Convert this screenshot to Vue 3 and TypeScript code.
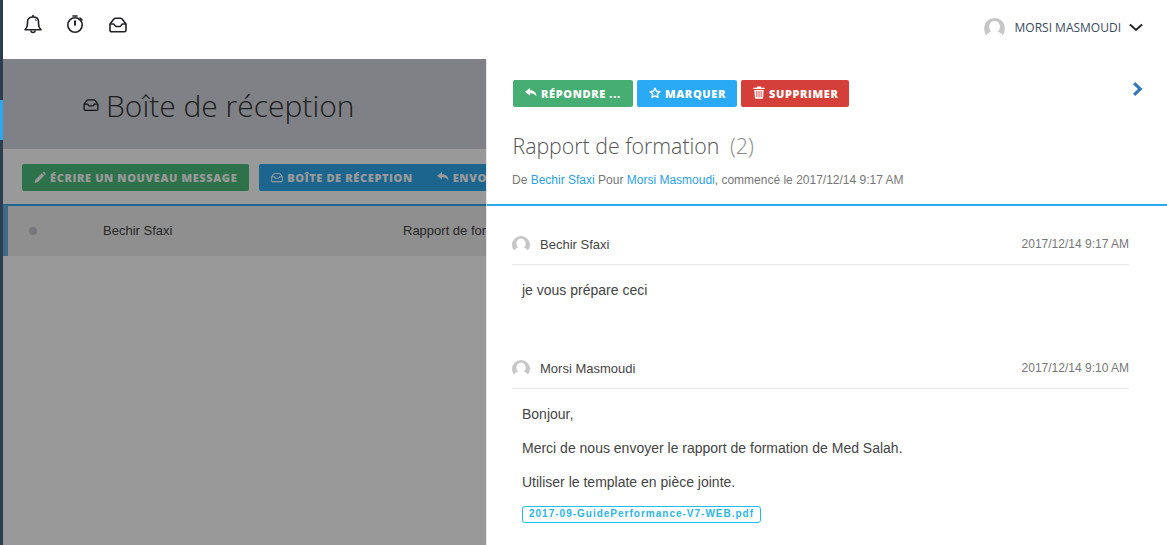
<script setup lang="ts">
interface Message {
  author: string
  date: string
}
const first: Message = { author: 'Bechir Sfaxi', date: '2017/12/14 9:17 AM' }
const second: Message = { author: 'Morsi Masmoudi', date: '2017/12/14 9:10 AM' }
</script>

<template>
  <div class="app">
    <aside class="rail"><div class="rail-active"></div></aside>
    <div class="main">
      <header class="topbar">
        <div class="top-icons">
          <svg class="ti bell" viewBox="0 0 18 20" fill="none" stroke="#1f2126" stroke-width="1.6">
            <path d="M1 15.8c1.6-1.4 2.5-3 2.5-6V7.6C3.5 4.7 5.900 3 9 3s5.500 1.700 5.500 4.600v2.200c0 3 .9 4.600 2.500 6z" stroke-linejoin="round"/>
            <path d="M9 1v2M7 16.500c0 1.300.9 2 2 2s2-.7 2-2"/>
            <path d="M11 5.500c.8.300 1.200.8 1.400 1.500" stroke-width="1"/>
          </svg>
          <svg class="ti clock" viewBox="0 0 18 20" fill="none" stroke="#1f2126" stroke-width="1.6">
            <circle cx="9" cy="11" r="7.200"/>
            <path d="M9 6.500v5" stroke-width="2"/>
            <path d="M7 2h4M14 4l2 2" stroke-linecap="round"/>
          </svg>
          <svg class="ti inbox" viewBox="0 0 18 16" fill="none" stroke="#1f2126" stroke-width="1.6">
            <path d="M1 7 4.500 2.500C5 1.600 5.700 1.200 6.500 1.200h5c.8 0 1.500.4 2 1.300L17 7v6.200c0 .9-.7 1.600-1.600 1.600H2.600c-.9 0-1.600-.7-1.600-1.600z" stroke-linejoin="round"/>
            <path d="M1 7h3.700c.8 0 1.200 2.500 2.300 2.500h4c1.100 0 1.500-2.500 2.300-2.500H17"/>
          </svg>
        </div>
        <div class="user">
          <svg class="avatar-top" viewBox="0 0 20 20">
            <circle cx="10" cy="10" r="10" fill="#c6c6c6"/>
            <ellipse cx="10" cy="8.500" rx="5.200" ry="5.800" fill="#fff"/>
            <path d="M2 17c1-3 4-4.500 8-4.500s7 1.500 8 4.500a10.500 10.500 0 0 1-16 0z" fill="#fff"/>
          </svg>
          <span class="user-name">MORSI MASMOUDI</span>
          <svg class="chev-down" viewBox="0 0 14 9" fill="none" stroke="#22262c" stroke-width="1.900">
            <path d="M1 1.500 7 7l6-5.500"/>
          </svg>
        </div>
      </header>

      <div class="stage">
        <section class="under">
          <div class="page-head">
            <svg class="head-icon" viewBox="0 0 18 14" fill="none" stroke="#222" stroke-width="1.500">
              <path d="M1 6 4 1.800C4.500 1.100 5 .9 5.800.9h6.400c.8 0 1.300.2 1.800.9L17 6v6c0 .7-.5 1.200-1.200 1.200H2.200C1.500 13.200 1 12.700 1 12z" stroke-linejoin="round"/>
              <path d="M1 6h4l1.500 2h5L13 6h4"/>
            </svg>
            <h1 class="page-title">Boîte de réception</h1>
          </div>
          <div class="tools">
            <button class="btn write">
              <svg class="bi" viewBox="0 0 12 12"><path d="M0 12 .8 8.600 8 1.400l2.600 2.600-7.200 7.200zM8.800.6 9.400 0a1 1 0 0 1 1.300 0l1.300 1.300a1 1 0 0 1 0 1.300l-.6.600z" fill="currentColor"/></svg>
              Écrire un nouveau message
            </button>
            <div class="btn-group">
              <button class="btn tab">
                <svg class="bi" viewBox="0 0 18 14" fill="none" stroke="currentColor" stroke-width="1.600">
                  <path d="M1 6 4 1.800C4.500 1.100 5 .9 5.800.9h6.400c.8 0 1.300.2 1.800.9L17 6v6c0 .7-.5 1.200-1.200 1.200H2.200C1.500 13.200 1 12.700 1 12z"/>
                  <path d="M1 6h4l1.500 2h5L13 6h4"/>
                </svg>
                Boîte de réception
              </button>
              <button class="btn tab">
                <svg class="bi reply-ic" viewBox="0 0 12 9"><path d="M5 0 0 3.700 5 7.400V5.200c3 0 4.800.6 6.500 3.300C11.500 4.700 9 2.300 5 2.300z" fill="currentColor"/></svg>
                Envoyés
              </button>
            </div>
          </div>
          <div class="row">
            <span class="dot"></span>
            <span class="row-from">Bechir Sfaxi</span>
            <span class="row-subject">Rapport de formation</span>
          </div>
          <div class="scrim"></div>
        </section>

        <section class="drawer">
          <div class="drawer-head">
            <div class="actions">
              <button class="btn act reply">
                <svg class="bi reply-ic" viewBox="0 0 12 9"><path d="M5 0 0 3.700 5 7.400V5.200c3 0 4.800.6 6.500 3.300C11.500 4.700 9 2.300 5 2.300z" fill="currentColor"/></svg>
                Répondre ...
              </button>
              <button class="btn act mark">
                <svg class="bi star" viewBox="0 0 14 14"><path d="m7 1.300 1.700 3.700 4 .5-3 2.700.8 4L7 10.300l-3.500 1.900.8-4-3-2.700 4-.5z" fill="none" stroke="currentColor" stroke-width="1.600" stroke-linejoin="round"/></svg>
                Marquer
              </button>
              <button class="btn act del">
                <svg class="bi trash" viewBox="0 0 12 14"><path d="M4 .5h4l.7 1.500H12v1.300H0V2h3.300zM1 4.200h10l-.6 8.500c0 .7-.5 1.100-1.100 1.100H2.700c-.6 0-1.100-.4-1.100-1.100zm2.200 1.300v6.500h1V5.500zm2.300 0v6.500h1V5.500zm2.300 0v6.500h1V5.500z" fill="currentColor" fill-rule="evenodd"/></svg>
                Supprimer
              </button>
              <svg class="chev-right" viewBox="0 0 11 14"><path d="M1 2.300 3.200 0 10.500 7 3.200 14 1 11.700 5.900 7z" fill="#337ab7"/></svg>
            </div>
            <h2 class="subject">Rapport de formation <span class="count">(2)</span></h2>
            <p class="meta">De <a>Bechir Sfaxi</a> Pour <a>Morsi Masmoudi</a>, commencé le 2017/12/14 9:17 AM</p>
          </div>

          <div class="thread">
            <article class="msg msg-first">
              <div class="msg-head">
                <svg class="avatar" viewBox="0 0 20 20">
                  <circle cx="10" cy="10" r="10" fill="#c6c6c6"/>
                  <ellipse cx="10" cy="8.500" rx="5.200" ry="5.800" fill="#fff"/>
                  <path d="M2 17c1-3 4-4.500 8-4.500s7 1.500 8 4.500a10.500 10.500 0 0 1-16 0z" fill="#fff"/>
                </svg>
                <span class="msg-author">{{ first.author }}</span>
                <span class="msg-date">{{ first.date }}</span>
              </div>
              <div class="msg-body"><p>je vous prépare ceci</p></div>
            </article>

            <article class="msg">
              <div class="msg-head">
                <svg class="avatar" viewBox="0 0 20 20">
                  <circle cx="10" cy="10" r="10" fill="#c6c6c6"/>
                  <ellipse cx="10" cy="8.500" rx="5.200" ry="5.800" fill="#fff"/>
                  <path d="M2 17c1-3 4-4.500 8-4.500s7 1.500 8 4.500a10.500 10.500 0 0 1-16 0z" fill="#fff"/>
                </svg>
                <span class="msg-author">{{ second.author }}</span>
                <span class="msg-date">{{ second.date }}</span>
              </div>
              <div class="msg-body">
                <p>Bonjour,</p>
                <p>Merci de nous envoyer le rapport de formation de Med Salah.</p>
                <p>Utiliser le template en pièce jointe.</p>
                <a class="chip">2017-09-GuidePerformance-V7-WEB.pdf</a>
              </div>
            </article>
          </div>
        </section>
      </div>
    </div>
  </div>
</template>

<style>
html, body { margin: 0; background: #fff; overflow: hidden; }
</style>

<style scoped>
.app { display: flex; width: 1167px; height: 545px; overflow: hidden; font-family: "Liberation Sans", Arial, sans-serif; color: #333; }
.rail { width: 3px; flex: none; background: #2c3e50; padding-top: 100px; box-sizing: border-box; }
.rail-active { height: 40px; background: #2ea6ef; }
.main { flex: 1; min-width: 0; display: flex; flex-direction: column; }
.topbar { height: 59px; flex: none; display: flex; justify-content: space-between; background: #fff; }
.top-icons { display: flex; align-items: flex-start; padding: 14px 0 0 21px; gap: 24px; }
.ti { display: block; }
.bell { width: 18px; height: 20px; }
.clock { width: 18px; height: 20px; }
.inbox { width: 18px; height: 16px; margin: 3px 0 0 1px; }
.user { display: flex; align-items: flex-start; padding: 18px 24px 0 0; }
.avatar-top { width: 21px; height: 21px; margin-right: 10px; }
.user-name { font: 400 12px/20px "Open Sans", sans-serif; color: #3b4b5e; }
.chev-down { width: 14px; height: 9px; margin: 5px 0 0 8px; }

.stage { flex: 1; min-height: 0; display: flex; position: relative; }
.under { position: relative; width: 483px; flex: none; overflow: hidden; background: #fff; }
.scrim { position: absolute; inset: 0; background: rgba(0, 0, 0, .4); }
.page-head { height: 90px; background: #d5d7df; display: flex; align-items: flex-start; padding: 27px 0 0 80px; box-sizing: border-box; }
.head-icon { width: 16px; height: 12px; margin: 13px 7px 0 0; flex: none; }
.page-title { margin: 0; font: 300 30px/40px "Open Sans", sans-serif; color: #333; white-space: nowrap; }
.tools { display: flex; gap: 10px; padding: 15px 0 13px 19px; }
.btn { height: 27px; border: 0; border-radius: 2px; padding: 0 12px; display: inline-flex; align-items: center; gap: 4px; font: 800 11px/27px "Open Sans", sans-serif; letter-spacing: .62px; text-transform: uppercase; color: #fff; white-space: nowrap; flex: none; }
.bi { width: 12px; height: 11px; flex: none; }
.reply-ic { height: 9px; margin-top: -2px; }
.write { background: #4cbe7c; }
.btn-group { display: flex; flex: none; }
.tab { background: #2ea9ef; border-radius: 0; }
.tab:first-child { border-radius: 2px 0 0 2px; }
.row { height: 52px; box-sizing: border-box; padding-bottom: 2px; display: flex; align-items: center; border-top: 2px solid #2ea9ef; border-left: 5px solid #6ab2e0; background: #eee; font-size: 13px; color: #444; }
.dot { width: 8px; height: 8px; flex: none; border-radius: 50%; background: #c3c8d0; margin: 2px 0 0 21px; }
.row-from { margin-left: 66px; width: 300px; flex: none; }
.row-subject { white-space: nowrap; }

.drawer { flex: 1; min-width: 0; background: #fff; border-left: 1px solid #e8e8e8; }
.drawer-head { height: 147px; box-sizing: border-box; padding: 21px 0 0 25px; border-bottom: 2px solid #2ea9ef; }
.actions { display: flex; gap: 4px; padding-right: 24px; margin-left: 1px; position: relative; }
.act { padding: 0 0 0 12px; }
.reply { width: 120px; background: #47ae73; }
.mark { width: 100px; background: #2aaaf5; }
.del { width: 108px; background: #d43f3a; }
.trash { height: 13px; margin-top: -2px; }
.star { height: 12px; margin-top: -1px; }
.chev-right { position: absolute; right: 24px; top: 2px; width: 11px; height: 14px; }
.subject { margin: 24px 0 0 .5px; font: 300 21.3px/30px "Open Sans", sans-serif; color: #555; }
.count { color: #888; margin-left: 5px; }
.meta { margin: 11px 0 0; font-size: 12px; line-height: 17px; color: #777; }
.meta a { color: #2a9fe8; }
.thread { padding: 29px 38px 0 25px; }
.msg-first { height: 124px; }
.msg-head { display: flex; align-items: center; height: 29px; border-bottom: 1px solid #e5e5e5; }
.avatar { width: 18px; height: 18px; margin: 0 10px 9px 0; flex: none; }
.msg-author { font-size: 13px; color: #444; margin-bottom: 11px; }
.msg-date { margin-left: auto; font-size: 12px; color: #777; margin-bottom: 11px; }
.msg-body { padding: 15px 10px 0; font-size: 14px; line-height: 20px; color: #444; }
.msg-body p { margin: 0 0 14px; }
.chip { display: inline-block; box-sizing: border-box; height: 17px; border: 1px solid #1cc0ee; border-radius: 3px; padding: 0 6px; font-size: 10px; line-height: 14px; font-weight: 700; letter-spacing: 1px; color: #2cb5e8; vertical-align: top; }
</style>
